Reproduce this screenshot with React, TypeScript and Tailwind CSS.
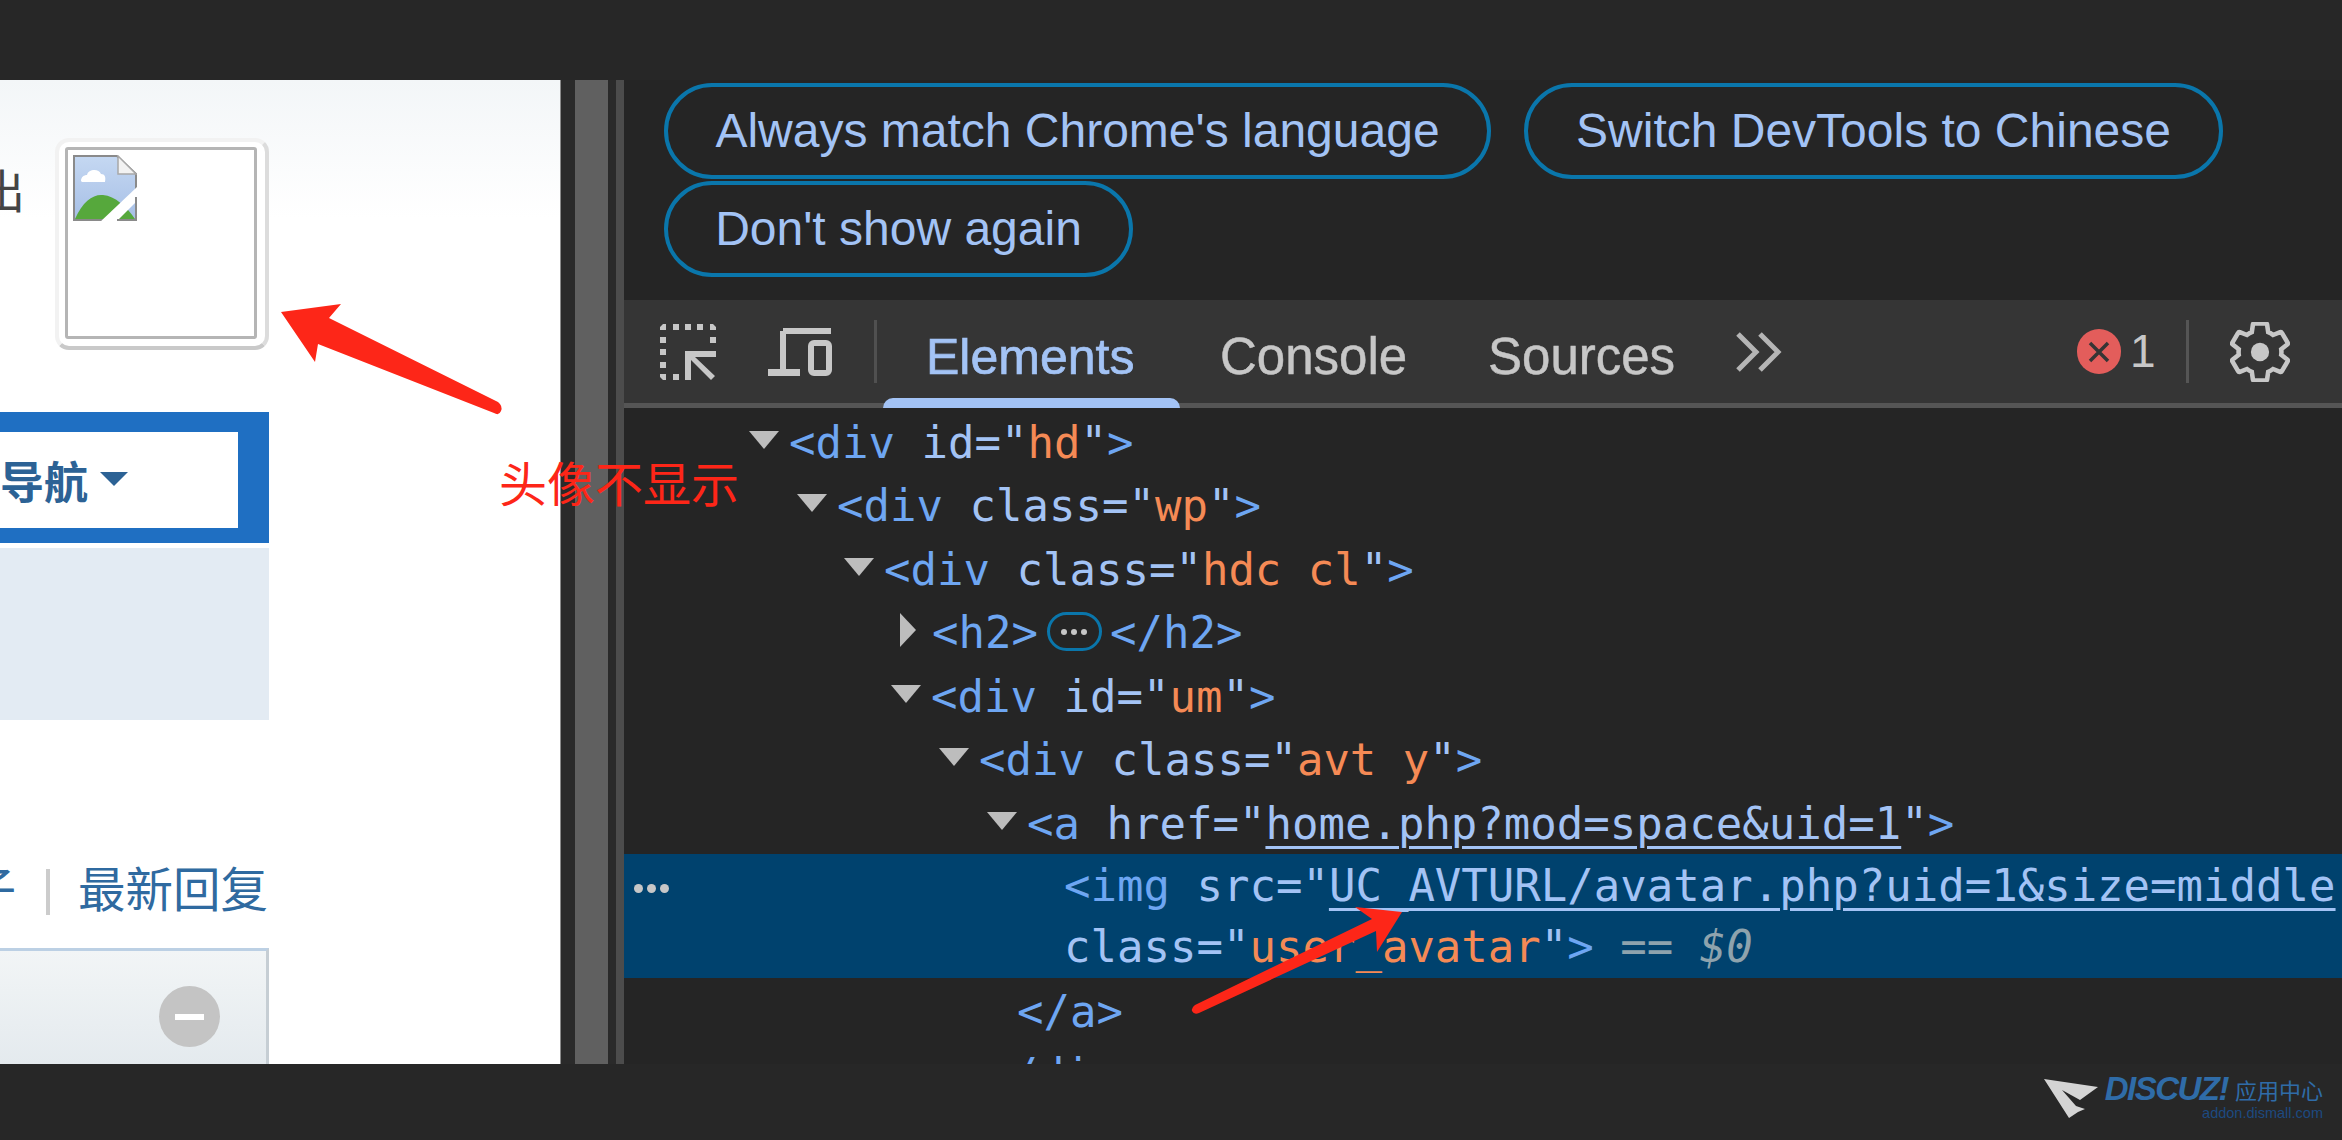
import React from "react";

const sans = "[font-family:'Liberation_Sans','Noto_Sans_CJK_SC',sans-serif]";
const cjk = "[font-family:'Noto_Sans_CJK_SC','Liberation_Sans',sans-serif]";

function Down() {
  return (
    <svg width="30" height="18" viewBox="0 0 30 18" className="shrink-0 mr-[10px]">
      <polygon points="0,0 30,0 15,18" fill="#bdbdbd" />
    </svg>
  );
}

function Right() {
  return (
    <svg width="16" height="34" viewBox="0 0 16 34" className="shrink-0 mr-[16px]">
      <polygon points="0,0 16,17 0,34" fill="#bdbdbd" />
    </svg>
  );
}

const T = ({ children }: { children: React.ReactNode }) => <span className="text-[#6ea6f2]">{children}</span>;
const A = ({ children }: { children: React.ReactNode }) => <span className="text-[#a3c3f5]">{children}</span>;
const V = ({ children }: { children: React.ReactNode }) => <span className="text-[#f58a55]">{children}</span>;
const L = ({ children }: { children: React.ReactNode }) => (
  <span className="text-[#a3c3f5] underline decoration-[3px] underline-offset-[7px]">{children}</span>
);

function BrokenImage() {
  return (
    <svg width="64" height="66" viewBox="0 0 64 66" className="block">
      <defs>
        <linearGradient id="sky" x1="0" y1="0" x2="0" y2="1">
          <stop offset="0" stopColor="#c5d8f2" />
          <stop offset="1" stopColor="#a6bfe6" />
        </linearGradient>
      </defs>
      <path d="M1 1H44L63 19V65H1Z" fill="url(#sky)" stroke="#8a8a8a" strokeWidth="2" />
      <path d="M45 1V19H63Z" fill="#f2f2f2" stroke="#a8a8a8" strokeWidth="1.5" />
      <path d="M8 26c0-4 3-6 6-6c1-6 12-7 14-1c4 0 5 3 4 8H9Z" fill="#ffffff" />
      <path d="M2 64C10 46 20 39 30 40C42 41 54 52 62 64Z" fill="#56a83c" />
      <path d="M66 30V44L42 68H26Z" fill="#ffffff" />
      <path d="M63 42V65H44" fill="none" stroke="#8a8a8a" strokeWidth="2" />
    </svg>
  );
}

function SelectIcon() {
  return (
    <svg width="56" height="56" viewBox="0 0 56 56" fill="none" className="shrink-0">
      <path
        d="M0 3 L3 0 H6 V6 H0 Z M13 0H19V6H13Z M25 0H31V6H25Z M37 0H43V6H37Z M50 0H53L56 3V6H50Z M0 13H6V19H0Z M50 13H56V19H50Z M0 25H6V31H0Z M0 38H6V44H0Z M0 50H6V56H3L0 53Z M13 50H19V56H13Z"
        fill="#c7c7c7"
      />
      <path d="M25 56V27H56V33H35L55 52L51 56L31 36V56Z" fill="#c7c7c7" />
    </svg>
  );
}

function DeviceIcon() {
  return (
    <svg width="64" height="48" viewBox="0 0 64 48" fill="none" className="shrink-0">
      <path d="M12 2H60M12 2V43" stroke="#c7c7c7" strokeWidth="6" transform="translate(3 1)" />
      <path d="M0 41H32V48H0Z" fill="#c7c7c7" />
      <rect x="43" y="15" width="18" height="30" rx="3" stroke="#c7c7c7" strokeWidth="6" />
    </svg>
  );
}

function GearIcon() {
  return (
    <svg width="60" height="60" viewBox="1.5 1.5 21 21" fill="none" className="shrink-0">
      <path
        d="M19.43 12.98c.04-.32.07-.64.07-.98 0-.34-.03-.66-.07-.98l2.11-1.65c.19-.15.24-.42.12-.64l-2-3.46c-.12-.22-.39-.3-.61-.22l-2.49 1c-.52-.4-1.08-.73-1.69-.98l-.38-2.65C14.46 2.18 14.25 2 14 2h-4c-.25 0-.46.18-.49.42l-.38 2.65c-.61.25-1.17.59-1.69.98l-2.49-1c-.23-.09-.49 0-.61.22l-2 3.46c-.13.22-.07.49.12.64l2.11 1.65c-.04.32-.07.65-.07.98 0 .33.03.66.07.98l-2.11 1.65c-.19.15-.24.42-.12.64l2 3.46c.12.22.39.3.61.22l2.49-1c.52.4 1.08.73 1.69.98l.38 2.65c.03.24.24.42.49.42h4c.25 0 .46-.18.49-.42l.38-2.65c.61-.25 1.17-.59 1.69-.98l2.49 1c.23.09.49 0 .61-.22l2-3.46c.12-.22.07-.49-.12-.64l-2.11-1.65z"
        stroke="#c7c7c7"
        strokeWidth="1.6"
      />
      <circle cx="12" cy="12" r="3.2" fill="#c7c7c7" />
    </svg>
  );
}

function Pill({ children, w }: { children: string; w: string }) {
  return (
    <div
      className={`${w} h-[96px] shrink-0 rounded-full border-[4px] border-[#0a76ab] flex items-center justify-center text-[48px] text-[#a3c3f5] whitespace-nowrap`}
    >
      {children}
    </div>
  );
}

function Overlays() {
  return (
    <>
      <svg width="2342" height="1140" viewBox="0 0 2342 1140" className="absolute left-0 top-0 pointer-events-none">
        <path
          d="M281 312L341 304L329 318L498 402Q503 406 501 411Q499 416 494 413L318 344L315 362Z"
          fill="#fd2618"
        />
        <path
          d="M1355 907L1402 912L1377 952L1376 931L1199 1013Q1194 1015 1192 1011Q1191 1008 1195 1005L1372 919Z"
          fill="#fd2618"
        />
      </svg>
      <div className={`absolute left-[499px] top-[453px] text-[48px] leading-[56px] text-[#fd2618] whitespace-nowrap ${cjk}`}>
        头像不显示
      </div>
    </>
  );
}

function Watermark() {
  return (
    <div className="flex justify-end items-start pt-[12px] pr-[19px] h-[76px]">
      <svg width="54" height="39" viewBox="0 0 54 39" className="mr-[7px] mt-[3px] shrink-0">
        <path d="M0 0L54 8L36 21L18 11L32 27L41 30L34 33L25 39Z" fill="#d4d4d4" />
      </svg>
      <div className="flex flex-col items-end">
        <div className="flex items-center h-[26px]">
          <span className={`text-[33px] leading-[26px] font-bold italic tracking-[-1.5px] text-[#2f6ca8] mr-[7px] ${sans}`}>DISCUZ!</span>
          <span className={`text-[22px] leading-[26px] text-[#2f6ca8] ${cjk}`}>应用中心</span>
        </div>
        <span className={`text-[14.5px] leading-[16px] mt-[3px] text-[#1d4a80] ${sans}`}>addon.dismall.com</span>
      </div>
    </div>
  );
}

function LeftPanel() {
  return (
    <div className={`w-[560px] h-full shrink-0 overflow-hidden bg-gradient-to-b from-[#f3f6f8] to-white to-[14%] ${cjk}`}>
      <div className="w-[269px] h-full flex flex-col">
        <div className="flex justify-end items-start h-[332px] pt-[58px] shrink-0">
          <span className="text-[46px] leading-[50px] mt-[25px] mr-[30px] text-[#444444] whitespace-nowrap shrink-0">出</span>
          <div className="w-[214px] h-[212px] shrink-0 bg-white rounded-[14px] border-[4px] border-[#f2f2f2] border-b-[#c9c9c9] border-r-[#dcdcdc] pl-[6px] pt-[5px]">
            <div className="w-[192px] h-[192px] bg-white rounded-[3px] border-[3px] border-[#b5b5b5] pl-[5px] pt-[5px]">
              <BrokenImage />
            </div>
          </div>
        </div>
        <div className="h-[131px] shrink-0 bg-[#1f6fc2] pt-[20px] pr-[31px] pb-[15px]">
          <div className="h-full bg-white flex items-center justify-end pr-[150px] overflow-hidden relative">
            <span className="text-[44px] font-bold text-[#2c6295] whitespace-nowrap shrink-0">导航</span>
            <svg width="28" height="14" viewBox="0 0 28 14" className="absolute left-[100px] top-[40px]">
              <polygon points="0,0 28,0 14,14" fill="#2c6295" />
            </svg>
          </div>
        </div>
        <div className="h-[172px] mt-[5px] bg-[#e3ebf3] shrink-0" />
        <div className="h-[228px] shrink-0 flex items-end justify-end pb-[33px] pr-[1px] whitespace-nowrap">
          <span className="text-[47.5px] leading-[48px] mb-[4px] text-[#2f6aa0] shrink-0">子</span>
          <div className="w-[4px] h-[46px] ml-[30px] mr-[28px] bg-[#cccccc] shrink-0" />
          <span className="text-[47.5px] leading-[48px] mb-[4px] text-[#2f6aa0] shrink-0">最新回复</span>
        </div>
        <div className="flex-1 border-t-[3px] border-r-[3px] border-t-[#bcd0e4] border-r-[#c6ced4] bg-gradient-to-b from-[#f2f5f6] to-[#e4eaee] flex justify-end items-start pt-[35px] pr-[46px]">
          <div className="w-[61px] h-[61px] rounded-full bg-[#c4c4c4] flex items-center justify-center">
            <div className="w-[29px] h-[6px] bg-white" />
          </div>
        </div>
      </div>
    </div>
  );
}

function Dots({ size, gap }: { size: string; gap: string }) {
  return (
    <>
      <i className={`block ${size} rounded-full bg-[#c7c7c7]`} />
      <i className={`block ${size} ${gap} rounded-full bg-[#c7c7c7]`} />
      <i className={`block ${size} ${gap} rounded-full bg-[#c7c7c7]`} />
    </>
  );
}

function RightPanel() {
  return (
    <div className={`flex-1 min-w-0 h-full overflow-hidden bg-[#252525] flex flex-col ${sans}`}>
      <div className="h-[220px] shrink-0 pl-[40px] pt-[3px] flex flex-wrap content-start gap-x-[33px] gap-y-[2px]">
        <Pill w="w-[827px]">Always match Chrome's language</Pill>
        <Pill w="w-[699px]">Switch DevTools to Chinese</Pill>
        <Pill w="w-[469px]">Don't show again</Pill>
      </div>
      <div className="h-[108px] shrink-0 bg-[#353535] border-b-[5px] border-[#555555] flex items-center pl-[36px] relative">
        <SelectIcon />
        <div className="w-[52px] shrink-0" />
        <DeviceIcon />
        <div className="w-[3px] h-[63px] ml-[42px] bg-[#505050] shrink-0" />
        <span className="ml-[49px] mt-[10px] w-[210px] text-[50px] leading-[60px] [-webkit-text-stroke:0.7px_#a3c3f5] text-[#a3c3f5] whitespace-nowrap">Elements</span>
        <span className="ml-[84px] mt-[10px] w-[187px] text-[51px] leading-[60px] [-webkit-text-stroke:0.5px_#c7c7c7] text-[#c7c7c7] whitespace-nowrap">Console</span>
        <span className="ml-[81px] mt-[10px] w-[187px] text-[51px] leading-[60px] [-webkit-text-stroke:0.5px_#c7c7c7] text-[#c7c7c7] whitespace-nowrap">Sources</span>
        <svg width="46" height="40" viewBox="0 0 46 40" fill="none" className="ml-[61px] shrink-0">
          <path d="M2 2L20 20L2 38M24 2L42 20L24 38" stroke="#b5b5b5" strokeWidth="5" />
        </svg>
        <div className="w-[44px] h-[45px] ml-[295px] rounded-full bg-[#e35d5b] flex items-center justify-center shrink-0">
          <svg width="22" height="22" viewBox="0 0 22 22" fill="none">
            <path d="M2 2L20 20M20 2L2 20" stroke="#353535" strokeWidth="3.5" />
          </svg>
        </div>
        <span className="ml-[9px] w-[20px] text-[46px] font-light text-[#c7c7c7]">1</span>
        <div className="w-[3px] h-[63px] ml-[36px] bg-[#555555] shrink-0" />
        <div className="ml-[41px]">
          <GearIcon />
        </div>
        <div className="absolute left-[259px] bottom-[-5px] w-[297px] h-[10px] rounded-t-[10px] bg-[#a3c3f5]" />
      </div>
      <div className="flex-1 min-h-0 overflow-hidden text-[44px] [font-family:'DejaVu_Sans_Mono',monospace] whitespace-pre">
        <div className="h-[63.5px] flex items-center pl-[125px]">
          <Down />
          <span className="pt-[6px]"><T>&lt;div </T><A>id="</A><V>hd</V><A>"</A><T>&gt;</T></span>
        </div>
        <div className="h-[63.5px] flex items-center pl-[173px]">
          <Down />
          <span className="pt-[6px]"><T>&lt;div </T><A>class="</A><V>wp</V><A>"</A><T>&gt;</T></span>
        </div>
        <div className="h-[63.5px] flex items-center pl-[220px]">
          <Down />
          <span className="pt-[6px]"><T>&lt;div </T><A>class="</A><V>hdc cl</V><A>"</A><T>&gt;</T></span>
        </div>
        <div className="h-[63.5px] flex items-center pl-[276px]">
          <Right />
          <span className="pt-[6px]"><T>&lt;h2&gt;</T></span>
          <div className="w-[55px] h-[39px] ml-[9px] mr-[8px] mt-[3px] rounded-full border-[3px] border-[#0a76ab] flex items-center justify-center shrink-0">
            <Dots size="w-[6px] h-[6px]" gap="ml-[4px]" />
          </div>
          <span className="pt-[6px]"><T>&lt;/h2&gt;</T></span>
        </div>
        <div className="h-[63.5px] flex items-center pl-[267px]">
          <Down />
          <span className="pt-[6px]"><T>&lt;div </T><A>id="</A><V>um</V><A>"</A><T>&gt;</T></span>
        </div>
        <div className="h-[63.5px] flex items-center pl-[315px]">
          <Down />
          <span className="pt-[6px]"><T>&lt;div </T><A>class="</A><V>avt y</V><A>"</A><T>&gt;</T></span>
        </div>
        <div className="h-[63.5px] flex items-center pl-[363px]">
          <Down />
          <span className="pt-[6px]"><T>&lt;a </T><A>href="</A><L>home.php?mod=space&amp;uid=1</L><A>"</A><T>&gt;</T></span>
        </div>
        <div className="h-[124px] mt-[1px] bg-[#00426e] relative">
          <div className="absolute left-[10px] top-[30px] flex">
            <Dots size="w-[9px] h-[9px]" gap="ml-[4px]" />
          </div>
          <div className="h-[62px] flex items-center pl-[440px]">
            <span className="pt-[2px]"><T>&lt;img </T><A>src="</A><L>UC_AVTURL/avatar.php?uid=1&amp;size=middle</L><A>"</A></span>
          </div>
          <div className="h-[62px] flex items-center pl-[440px]">
            <span><A>class="</A><V>user_avatar</V><A>"</A><T>&gt;</T><span className="text-[#8ea3ad]"> == </span><span className="italic text-[#8ea3ad]">$0</span></span>
          </div>
        </div>
        <div className="h-[63.5px] flex items-center pl-[393px]">
          <span className="pt-[5px]"><T>&lt;/a&gt;</T></span>
        </div>
        <div className="h-[63.5px] flex items-center pl-[361px]">
          <span className="pt-[5px]"><T>&lt;/div&gt;</T></span>
        </div>
      </div>
    </div>
  );
}

export default function App() {
  return (
    <div className="relative w-[2342px] h-[1140px] bg-[#272727] overflow-hidden">
      <div className="h-[80px]" />
      <div className="h-[984px] flex">
        <LeftPanel />
        <div className="w-[15px] h-full shrink-0 bg-[#2a2a2a] border-l-[1px] border-[#8a8a8a]" />
        <div className="w-[33px] h-full shrink-0 bg-[#606060]" />
        <div className="w-[8px] h-full shrink-0 bg-[#2a2a2a]" />
        <div className="w-[8px] h-full shrink-0 bg-[#4c4c4c]" />
        <RightPanel />
      </div>
      <Watermark />
      <Overlays />
    </div>
  );
}
